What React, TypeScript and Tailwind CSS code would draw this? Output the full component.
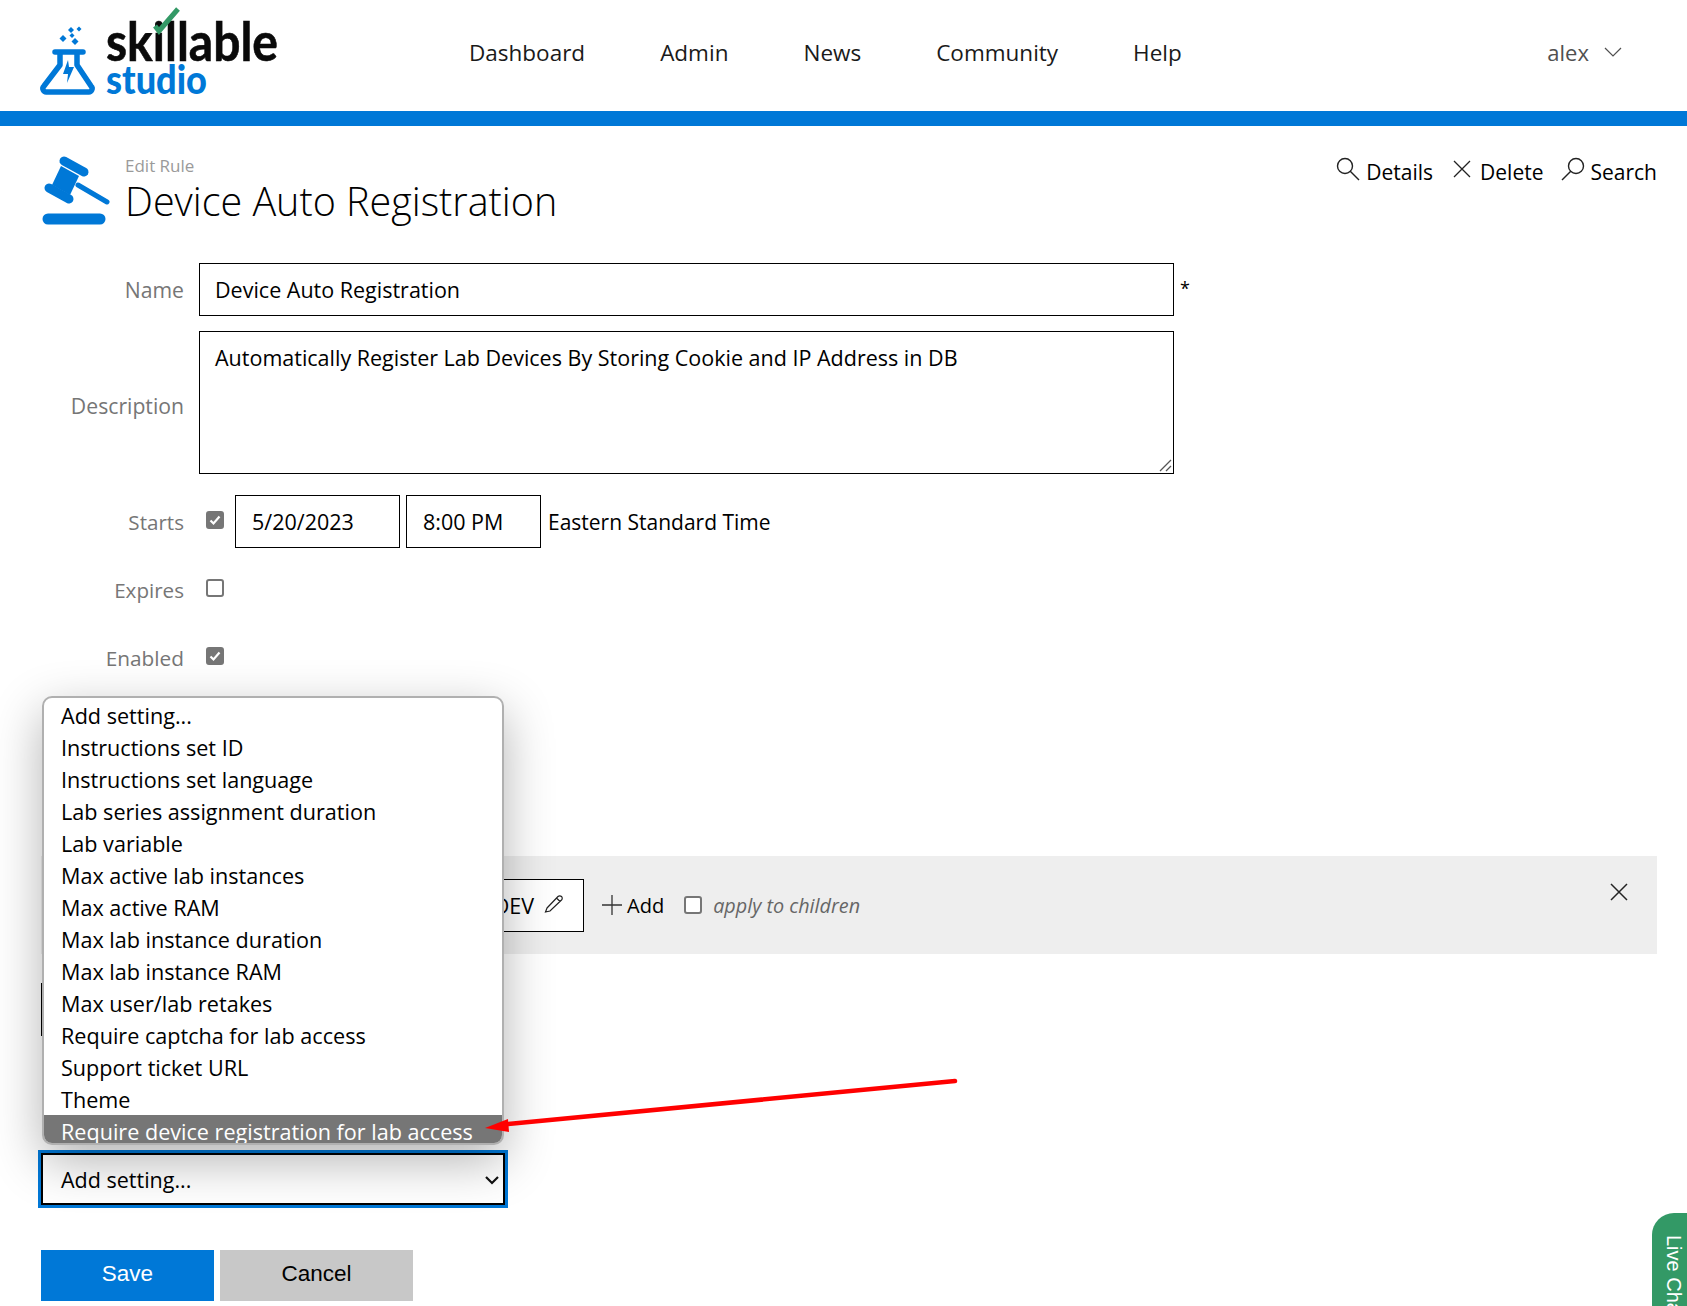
import React from "react";

const font = "font-['Open_Sans','Noto_Sans',sans-serif]";

function Logo() {
  return (
    <svg width="300" height="111" viewBox="0 0 300 111" className="block" aria-hidden="true">
      <g fill="#0078d7">
        <path d="M63 35l3.500 3.500L63 42l-3.500-3.500z" />
        <path d="M71 27l3 3-3 3-3-3z" />
        <path d="M79 26.500l2.500 2.500-2.500 2.500-2.500-2.500z" />
        <path d="M72 33l2.500 2.500L72 38l-2.500-2.500z" />
        <path d="M75 38l3.500 3.500L75 45l-3.500-3.500z" />
      </g>
      <path d="M55 52h28M60 52v13L44 86a3.500 3.500 0 0 0 3 6h41a3.500 3.500 0 0 0 3-6L77 65V52" fill="none" stroke="#0078d7" strokeWidth="5.500" strokeLinecap="round" strokeLinejoin="round" />
      <path d="M68 60l-5 14h5l-1 9 7-16h-5z" fill="#0078d7" />
      <text x="106" y="61" fontFamily="Lato, sans-serif" fontWeight="700" fontSize="54" textLength="172" lengthAdjust="spacingAndGlyphs" fill="#0a0a0a" stroke="#0a0a0a" strokeWidth="0.600">skillable</text>
      <rect x="146" y="20" width="9" height="13" fill="#fff" />
      <path d="M155 26l4 5 19-22" fill="none" stroke="#339966" strokeWidth="5" />
      <text x="106" y="94" fontFamily="Lato, sans-serif" fontWeight="900" fontSize="40" textLength="101" lengthAdjust="spacingAndGlyphs" fill="#0078d7">studio</text>
    </svg>
  );
}

function Gavel() {
  return (
    <svg width="70" height="72" viewBox="0 0 70 72" className="block" aria-hidden="true">
      <g fill="none" stroke="#0078d7" strokeLinecap="round">
        <path d="M23 7l20 11" strokeWidth="9" />
        <path d="M8 34l20 11" strokeWidth="9" />
        <path d="M20 12L38 22 29 41 11 31z" fill="#0078d7" stroke="none" />
        <path d="M37 31l29 17" strokeWidth="5" />
        <path d="M7 65h52" strokeWidth="11" />
      </g>
    </svg>
  );
}

function Check({ checked }: { checked?: boolean }) {
  return (
    <span className={`flex h-[18px] w-[18px] shrink-0 items-center justify-center rounded-[3px] border-2 border-[#767676] ${checked ? "bg-[#767676]" : "bg-white"}`}>
      {checked && (
        <svg width="14" height="14" viewBox="0 0 14 14" aria-hidden="true">
          <path d="M2.500 7.500l3 3 6-7" fill="none" stroke="#fff" strokeWidth="2.200" />
        </svg>
      )}
    </span>
  );
}

function Row({ label, className, labelClass, children }: { label: string; className?: string; labelClass?: string; children: React.ReactNode }) {
  return (
    <div className={`flex items-center ${className ?? ""}`}>
      <div className={`w-[143px] shrink-0 text-right text-[#767676] ${labelClass ?? "text-[21.200px]"}`}>{label}</div>
      <div className="ml-[15px] flex items-center">{children}</div>
    </div>
  );
}

const options = [
  "Add setting...",
  "Instructions set ID",
  "Instructions set language",
  "Lab series assignment duration",
  "Lab variable",
  "Max active lab instances",
  "Max active RAM",
  "Max lab instance duration",
  "Max lab instance RAM",
  "Max user/lab retakes",
  "Require captcha for lab access",
  "Support ticket URL",
  "Theme",
];

export default function App() {
  return (
    <div className={`relative h-[1306px] w-[1687px] overflow-hidden bg-white text-[21.500px] leading-[30px] text-black ${font}`}>
      <header className="flex h-[111px] items-center">
        <div className="w-[469px] shrink-0"><Logo /></div>
        <nav className="-mt-[6px] flex gap-[75px] text-[22.500px] text-[#1a1a1a]">
          <span>Dashboard</span>
          <span>Admin</span>
          <span>News</span>
          <span>Community</span>
          <span>Help</span>
        </nav>
        <div className="-mt-[8px] mr-[65px] ml-auto flex items-center gap-[15px] text-[22px] text-[#505050]">
          <span>alex</span>
          <svg width="18" height="10" viewBox="0 0 18 10" aria-hidden="true"><path d="M1 1l8 8 8-8" fill="none" stroke="#505050" strokeWidth="1.200" /></svg>
        </div>
      </header>
      <div className="h-[15px] bg-[#0078d7]" />

      <main className="px-[41px]">
        <div className="flex items-start justify-between pt-[28px]">
          <div className="flex">
            <Gavel />
            <div className="ml-[14px] pt-[1px]">
              <div className="text-[17px] leading-[22px] text-[#9a9a9a]">Edit Rule</div>
              <h1 className="-mt-[2px] text-[39.500px] leading-[52px] font-light">Device Auto Registration</h1>
            </div>
          </div>
          <div className="-mr-[11px] mt-[3px] flex items-center text-[21px]">
            <svg width="24" height="24" viewBox="0 0 24 24" className="-mt-[6px]" aria-hidden="true"><circle cx="9" cy="9" r="7.500" fill="none" stroke="#222" strokeWidth="1.400" /><path d="M14 14l9 9" stroke="#222" strokeWidth="1.400" /></svg>
            <span className="ml-[6px]">Details</span>
            <svg width="18" height="18" viewBox="0 0 18 18" className="-mt-[6px] ml-[20px]" aria-hidden="true"><path d="M1 1l16 16M17 1L1 17" stroke="#222" strokeWidth="1.300" /></svg>
            <span className="ml-[9px]">Delete</span>
            <svg width="24" height="24" viewBox="0 0 24 24" className="-mt-[6px] ml-[17px]" aria-hidden="true"><circle cx="15" cy="9" r="7.500" fill="none" stroke="#222" strokeWidth="1.400" /><path d="M10 14l-9 9" stroke="#222" strokeWidth="1.400" /></svg>
            <span className="ml-[6px]">Search</span>
          </div>
        </div>

        <div className="mt-[36px]">
          <Row label="Name">
            <div className="flex h-[53px] w-[975px] items-center border border-black px-[15px]">Device Auto Registration</div>
            <span className="-mt-[4px] ml-[6px] text-[18px]">*</span>
          </Row>
          <Row label="Description" className="mt-[15px]" labelClass="pt-[6px] text-[21.200px]">
            <div className="relative h-[143px] w-[975px] border border-black px-[15px] pt-[11px]">
              Automatically Register Lab Devices By Storing Cookie and IP Address in DB
              <svg width="14" height="14" viewBox="0 0 14 14" className="absolute right-[1px] bottom-[1px]" aria-hidden="true"><path d="M13 2L2 13M13 8l-5 5" stroke="#555" strokeWidth="1.300" /></svg>
            </div>
          </Row>
          <Row label="Starts" className="mt-[21px]" labelClass="text-[20.600px]">
            <span className="-mt-[3px] ml-[7px]"><Check checked /></span>
            <div className="ml-[11px] flex h-[53px] w-[165px] items-center border border-black px-[16px]">5/20/2023</div>
            <div className="ml-[6px] flex h-[53px] w-[135px] items-center border border-black px-[16px]">8:00 PM</div>
            <span className="ml-[7px] text-[21px]">Eastern Standard Time</span>
          </Row>
          <Row label="Expires" className="mt-[15px] h-[53px]" labelClass="text-[20.600px]"><span className="-mt-[3px] ml-[7px]"><Check /></span></Row>
          <Row label="Enabled" className="mt-[15px] h-[53px]" labelClass="text-[20.800px]"><span className="-mt-[3px] ml-[7px]"><Check checked /></span></Row>
        </div>

        <div className="mt-[172px] flex h-[98px] w-[1616px] items-start justify-between bg-[#eeeeee] pr-[29px]">
          <div className="mt-[23px] ml-[409px] flex items-center">
            <div className="flex h-[53px] w-[134px] items-center justify-end border border-black bg-white pr-[19px]">
              <span>DEV</span>
              <svg width="20" height="20" viewBox="0 0 20 20" className="-mt-[4px] ml-[10px]" aria-hidden="true"><path d="M3 14L14 2.500a2 2 0 0 1 3.500 3.500L6 17l-4.500 1z M12.500 4l3.500 3.500" fill="none" stroke="#222" strokeWidth="1.200" /></svg>
            </div>
            <svg width="20" height="20" viewBox="0 0 20 20" className="-mt-[2px] ml-[18px]" aria-hidden="true"><path d="M10 0v20M0 10h20" stroke="#333" strokeWidth="1.300" /></svg>
            <span className="ml-[5px] text-[20px]">Add</span>
            <span className="-mt-[2px] ml-[20px]"><Check /></span>
            <span className="ml-[11px] text-[19.800px] text-[#666] italic">apply to children</span>
          </div>
          <svg width="18" height="18" viewBox="0 0 18 18" className="mt-[27px]" aria-hidden="true"><path d="M1 1l16 16M17 1L1 17" stroke="#222" strokeWidth="1.500" /></svg>
        </div>

        <div className="mt-[29px] h-[53px] w-[300px] border border-black" />

        <div className="mt-[117px] flex h-[52px] w-[464px] items-center justify-between border-2 border-black bg-white pt-[1px] pr-[3px] pl-[18px] outline-3 outline-[#0078d7]">
          <span>Add setting...</span>
          <svg width="16" height="10" viewBox="0 0 16 10" aria-hidden="true"><path d="M2 2l6 6 6-6" fill="none" stroke="#111" strokeWidth="2.200" /></svg>
        </div>

        <div className="mt-[45px] flex gap-[6px] font-['Liberation_Sans',sans-serif] text-[22.500px]">
          <button className="h-[51px] w-[173px] bg-[#0078d7] pb-[3px] text-white">Save</button>
          <button className="h-[51px] w-[193px] bg-[#c8c8c8] pb-[3px] text-black">Cancel</button>
        </div>
      </main>

      <div className="absolute top-[696px] left-[42px] z-20 h-[449px] w-[462px] overflow-hidden rounded-[10px] border-2 border-[#b0b0b0] bg-white text-[21.600px] shadow-[0_16px_50px_rgba(0,0,0,0.3)]">
        <ul className="pt-[1px]">
          {options.map((o) => (
            <li key={o} className="h-[32px] pl-[17px] leading-[34px]">{o}</li>
          ))}
          <li className="h-[32px] bg-[#767676] pl-[17px] leading-[34px] text-white">Require device registration for lab access</li>
        </ul>
      </div>

      <svg className="pointer-events-none absolute top-[1070px] left-[480px] z-30" width="480" height="66" viewBox="0 0 480 66" aria-hidden="true">
        <path d="M475 11L28 54" stroke="#ff0000" strokeWidth="4.500" strokeLinecap="round" />
        <path d="M5 58l23-9 1 13z" fill="#ff0000" />
      </svg>

      <div className="absolute top-[1213px] left-[1652px] h-[120px] w-[60px] rounded-l-[22px] bg-[#339966] font-['Liberation_Sans',sans-serif]">
        <span className="mt-[22px] ml-[7px] block text-[20px] leading-[30px] whitespace-nowrap text-white [writing-mode:vertical-rl]">Live Chat</span>
      </div>
    </div>
  );
}
